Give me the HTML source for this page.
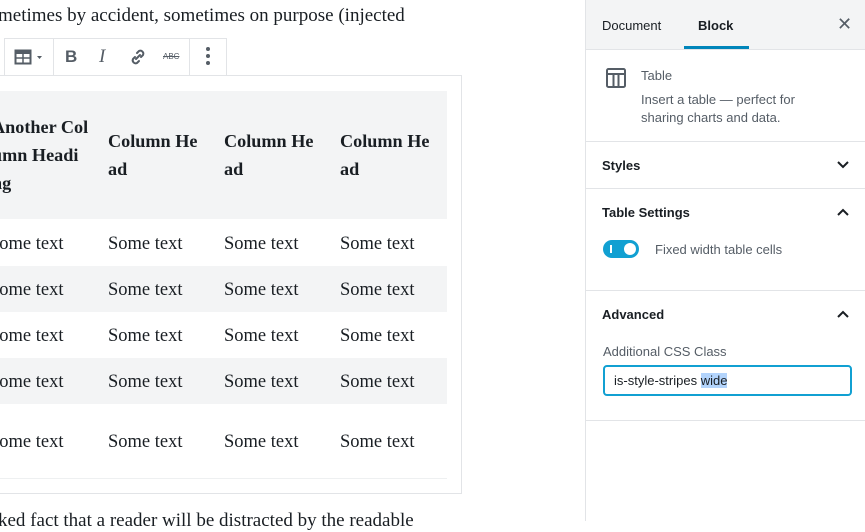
<!DOCTYPE html>
<html><head><style>
*{box-sizing:border-box;margin:0;padding:0}
body{width:865px;height:521px;overflow:hidden;background:#fff;position:relative;font-family:"Liberation Serif",serif;color:#191e23}
.abs{position:absolute}
.serif{font-family:"Liberation Serif",serif;font-size:19px}
.sans{font-family:"Liberation Sans",sans-serif}
.cell{position:absolute;font-size:18.5px;white-space:nowrap}
.hd{font-weight:bold;line-height:28px;font-size:18.2px}
</style></head><body>
<div class="abs serif" style="left:-2px;top:5px;white-space:nowrap">metimes by accident, sometimes on purpose (injected</div>
<div class="abs" style="left:-2px;top:75px;width:464px;height:419px;border:1px solid #e2e4e7"></div>
<div class="abs" style="left:4px;top:38px;width:223px;height:38px;border:1px solid #e2e4e7;background:#fff"></div>
<div class="abs" style="left:53px;top:38px;width:1px;height:38px;background:#e2e4e7"></div>
<div class="abs" style="left:189px;top:38px;width:1px;height:38px;background:#e2e4e7"></div>
<svg class="abs" style="left:14px;top:48px" width="32" height="20" viewBox="0 0 32 20">
<rect x="1.5" y="2.5" width="15" height="13" fill="none" stroke="#555d66" stroke-width="2"/>
<rect x="1" y="2" width="16" height="4" fill="#555d66"/>
<line x1="1" y1="10" x2="17" y2="10" stroke="#555d66" stroke-width="1.5"/>
<line x1="9" y1="6" x2="9" y2="16" stroke="#555d66" stroke-width="1.5"/>
<path d="M23 8h5l-2.5 3z" fill="#555d66"/></svg>
<div class="abs sans" style="left:65px;top:47px;font-size:17px;font-weight:bold;color:#555d66">B</div>
<div class="abs serif" style="left:99px;top:46px;font-size:19px;font-style:italic;color:#555d66">I</div>
<svg class="abs" style="left:128px;top:47px" width="20" height="20" viewBox="0 0 20 20"><g fill="none" stroke="#555d66" stroke-width="2" stroke-linecap="round"><path d="M9 6l2-2a3 3 0 014 4l-2 2"/><path d="M11 14l-2 2a3 3 0 01-4-4l2-2"/><path d="M8 12l4-4"/></g></svg>
<div class="abs sans" style="left:163px;top:52px;font-size:8px;color:#555d66;text-decoration:line-through">ABC</div>
<div class="abs" style="left:206px;top:47px;width:4px;height:4px;border-radius:2px;background:#555d66;box-shadow:0 7px 0 #555d66,0 14px 0 #555d66"></div>
<div class="abs" style="left:0;top:91px;width:447px;height:128px;background:#f3f4f5"></div>
<div class="abs" style="left:0;top:266px;width:447px;height:46px;background:#f3f4f5"></div>
<div class="abs" style="left:0;top:358px;width:447px;height:46px;background:#f3f4f5"></div>
<div class="abs" style="left:0;top:478px;width:447px;height:1px;background:#eef0f1"></div>
<div class="cell hd" style="left:-8px;top:113px">Another Col<br>umn Headi<br>ng</div>
<div class="cell hd" style="left:108px;top:127px">Column He<br>ad</div>
<div class="cell hd" style="left:224px;top:127px">Column He<br>ad</div>
<div class="cell hd" style="left:340px;top:127px">Column He<br>ad</div>
<div class="cell" style="left:-11px;top:234px">Some text</div><div class="cell" style="left:108px;top:234px">Some text</div><div class="cell" style="left:224px;top:234px">Some text</div><div class="cell" style="left:340px;top:234px">Some text</div>
<div class="cell" style="left:-11px;top:280px">Some text</div><div class="cell" style="left:108px;top:280px">Some text</div><div class="cell" style="left:224px;top:280px">Some text</div><div class="cell" style="left:340px;top:280px">Some text</div>
<div class="cell" style="left:-11px;top:326px">Some text</div><div class="cell" style="left:108px;top:326px">Some text</div><div class="cell" style="left:224px;top:326px">Some text</div><div class="cell" style="left:340px;top:326px">Some text</div>
<div class="cell" style="left:-11px;top:372px">Some text</div><div class="cell" style="left:108px;top:372px">Some text</div><div class="cell" style="left:224px;top:372px">Some text</div><div class="cell" style="left:340px;top:372px">Some text</div>
<div class="cell" style="left:-11px;top:432px">Some text</div><div class="cell" style="left:108px;top:432px">Some text</div><div class="cell" style="left:224px;top:432px">Some text</div><div class="cell" style="left:340px;top:432px">Some text</div>
<div class="abs serif" style="left:-2px;top:510px;white-space:nowrap">ked fact that a reader will be distracted by the readable</div>
<div class="abs sans" style="left:585px;top:0;width:280px;height:521px;border-left:1px solid #e2e4e7;background:#fff;font-size:13px;color:#191e23">
 <div style="height:50px;background:#f3f4f5;border-bottom:1px solid #e2e4e7;position:relative">
  <div class="abs" style="left:16px;top:18px">Document</div>
  <div class="abs" style="left:112px;top:18px;font-weight:bold">Block</div>
  <div class="abs" style="left:98px;top:46px;width:65px;height:3px;background:#0085ba"></div>
  <div class="abs" style="left:251px;top:14px;font-size:18px;color:#555d66">✕</div>
 </div>
 <svg class="abs" style="left:20px;top:68px" width="20" height="20" viewBox="0 0 20 20"><rect x="1" y="1" width="18" height="18" rx="1.5" fill="none" stroke="#555d66" stroke-width="2"/><line x1="1" y1="6" x2="19" y2="6" stroke="#555d66" stroke-width="2"/><line x1="7.5" y1="6" x2="7.5" y2="19" stroke="#555d66" stroke-width="2"/><line x1="12.5" y1="6" x2="12.5" y2="19" stroke="#555d66" stroke-width="2"/></svg>
 <div class="abs" style="left:55px;top:68px;color:#555d66">Table</div>
 <div class="abs" style="left:55px;top:91px;color:#555d66;line-height:18px">Insert a table — perfect for<br>sharing charts and data.</div>
 <div class="abs" style="left:0;top:141px;width:280px;height:1px;background:#e2e4e7"></div>
 <div class="abs" style="left:16px;top:158px;font-weight:bold">Styles</div>
 <svg class="abs" style="left:250px;top:158px" width="14" height="14" viewBox="0 0 14 14"><path d="M2 4l5 5 5-5" fill="none" stroke="#191e23" stroke-width="2"/></svg>
 <div class="abs" style="left:0;top:188px;width:280px;height:1px;background:#e2e4e7"></div>
 <div class="abs" style="left:16px;top:205px;font-weight:bold">Table Settings</div>
 <svg class="abs" style="left:250px;top:205px" width="14" height="14" viewBox="0 0 14 14"><path d="M2 10l5-5 5 5" fill="none" stroke="#191e23" stroke-width="2"/></svg>
 <div class="abs" style="left:17px;top:240px;width:36px;height:18px;border-radius:9px;background:#11a0d2"></div>
 <div class="abs" style="left:24px;top:245px;width:2px;height:8px;background:#fff"></div>
 <div class="abs" style="left:38px;top:243px;width:12px;height:12px;border-radius:6px;background:#fff"></div>
 <div class="abs" style="left:69px;top:242px;color:#555d66">Fixed width table cells</div>
 <div class="abs" style="left:0;top:290px;width:280px;height:1px;background:#e2e4e7"></div>
 <div class="abs" style="left:16px;top:307px;font-weight:bold">Advanced</div>
 <svg class="abs" style="left:250px;top:307px" width="14" height="14" viewBox="0 0 14 14"><path d="M2 10l5-5 5 5" fill="none" stroke="#191e23" stroke-width="2"/></svg>
 <div class="abs" style="left:17px;top:344px;color:#555d66">Additional CSS Class</div>
 <div class="abs" style="left:17px;top:365px;width:249px;height:31px;border:2px solid #11a0d2;border-radius:4px;padding:6px 9px;color:#191e23">is-style-stripes <span style="background:#b3d4fc">wide</span></div>
 <div class="abs" style="left:0;top:420px;width:280px;height:1px;background:#e2e4e7"></div>
</div>
</body></html>
